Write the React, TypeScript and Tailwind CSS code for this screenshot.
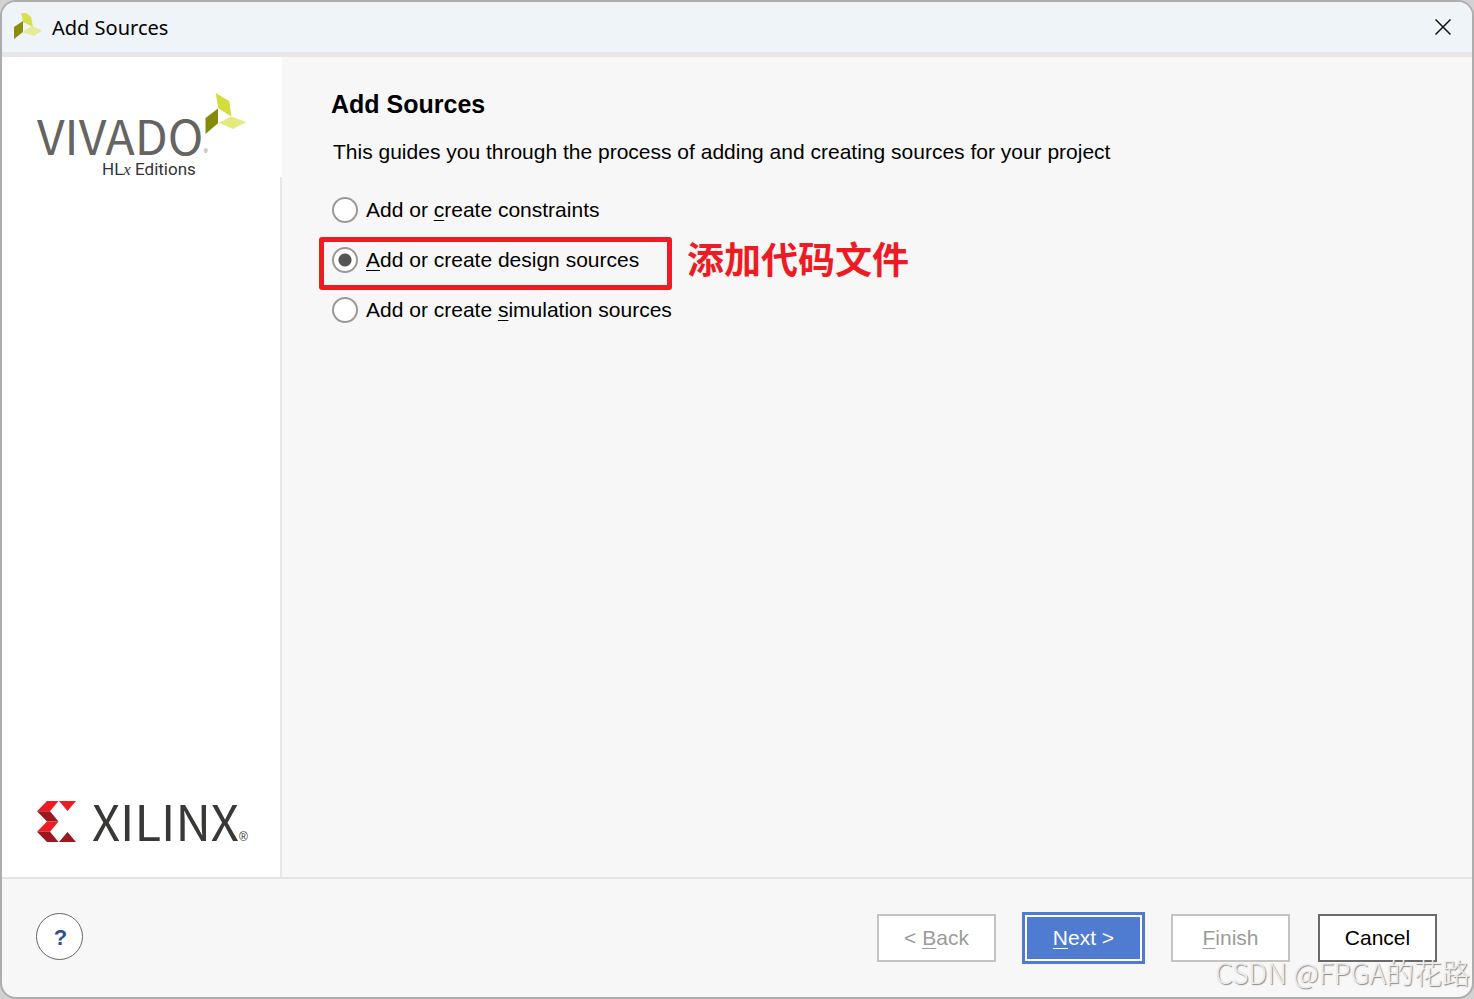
import { useState, type ReactNode } from 'react';

const SANS = "font-['Liberation_Sans',Arial,sans-serif]";

function VivadoMark({ className }: { className: string }) {
  return (
    <svg viewBox="0 0 42 42" className={className} aria-hidden="true">
      <path d="M10.5 0 24.5 8.5 26.5 24 13 15.5Z" fill="#d3de3c" />
      <path d="M0 25.5 12.8 15.8V31L0 42Z" fill="#858a0a" />
      <path d="M13.5 30.5 26.5 24 42 30 28 37Z" fill="#e4ea7f" />
    </svg>
  );
}

function TitleMark() {
  return (
    <svg viewBox="0 0 28 28" className="h-7 w-7" aria-hidden="true">
      <path d="M7 -1H11L17 4 19 14 9 9Z" fill="#d8e04f" />
      <path d="M0 14 9 8V19L0 26Z" fill="#8b8e0c" />
      <path d="M8 19 18 13 28 17.5 20 23Z" fill="#e6eb95" />
    </svg>
  );
}

function XilinxMark() {
  return (
    <svg viewBox="0 0 39 41" className="h-[41px] w-[39px]" aria-hidden="true">
      <path d="M10 0H21.5L13 10.3H0Z" fill="#ec1c24" />
      <path d="M0 10.3H13L21.5 20.5H10Z" fill="#9b1820" />
      <path d="M10 20.5H21.5L13 30.7H0Z" fill="#ec1c24" />
      <path d="M0 30.7H13L21.5 41H10Z" fill="#9b1820" />
      <path d="M22 0H39L30.5 10Z" fill="#ec1c24" />
      <path d="M22 41H39L30.5 31Z" fill="#9b1820" />
    </svg>
  );
}

function Key({ children }: { children: ReactNode }) {
  return <span className="underline decoration-1 underline-offset-[3px]">{children}</span>;
}

function Sidebar() {
  return (
    <aside className="flex w-[280px] shrink-0 flex-col bg-white">
      <div className="h-[120px] pl-[35px] pt-9">
        <div className="relative w-[210px] text-[#646463]">
          <div className="flex items-end pt-5 font-['Noto_Sans_CJK_SC',sans-serif] text-[48px] leading-[42px]">
            VIVADO<span className="font-['Liberation_Sans'] text-[6px] leading-[8px]">®</span>
          </div>
          <VivadoMark className="absolute right-0 top-0 h-[41px] w-[42px]" />
          <div className="mt-[5px] pl-[65px] font-['Roboto',sans-serif] text-[17px] leading-[18px] text-[#333]">
            HL<span className="font-['Liberation_Serif',serif] italic">x</span> Editions
          </div>
        </div>
      </div>
      <div className="flex grow flex-col justify-end border-r-2 border-[#e6e6e6] pb-[26px] pl-[35px]">
        <div className="flex h-[60px] items-center">
          <XilinxMark />
          <span className="ml-4 pb-0.5 font-['Noto_Sans_CJK_SC',sans-serif] text-[49px] leading-[60px] text-[#383837]">XILINX</span>
          <span className="self-end pb-2 text-[12px] leading-[12px] text-[#383837]">®</span>
        </div>
      </div>
    </aside>
  );
}

const CHOICES = [
  { id: 'constraints', label: <>Add or <Key>c</Key>reate constraints</> },
  { id: 'design', label: <><Key>A</Key>dd or create design sources</>, note: '添加代码文件' },
  { id: 'simulation', label: <>Add or create <Key>s</Key>imulation sources</> },
];

const BUTTON = 'h-12 w-[119px] border-2 bg-white pb-px text-center';

export default function App() {
  const [choice, setChoice] = useState('design');
  return (
    <div className="relative min-h-screen bg-[#d2d2d2]">
      <div
        className={`flex min-h-screen flex-col overflow-hidden rounded-[16px] border-2 border-[#adadad] bg-[#f7f7f7] text-[21px] text-black ${SANS}`}
      >
        <header className="flex h-[55px] shrink-0 items-center border-b-[5px] border-[#e6e6e6] bg-[#eef4f7] pl-3 pr-[21px]">
          <TitleMark />
          <h1 className="ml-[10px] grow pt-0.5 font-['Noto_Sans',sans-serif] text-[20px] leading-[28px]">Add Sources</h1>
          <button type="button" aria-label="Close">
            <svg viewBox="0 0 16 16" className="h-4 w-4" stroke="#111" strokeWidth="1.5" fill="none">
              <path d="M.5.5 15.5 15.5M15.5.5.5 15.5" />
            </svg>
          </button>
        </header>

        <div className="flex grow">
          <Sidebar />
          <main className="grow pl-[49px] pt-[31px]">
            <h2 className="text-[25px] font-bold leading-[32px]">Add Sources</h2>
            <p className="mt-4 pl-0.5 leading-[32px]">
              This guides you through the process of adding and creating sources for your project
            </p>
            <div role="radiogroup" aria-label="Source type" className="mt-[17px]">
              {CHOICES.map((c) => (
                <div key={c.id} className="relative flex h-[50px] items-center">
                  <input
                    id={c.id}
                    type="radio"
                    name="source"
                    checked={choice === c.id}
                    onChange={() => setChoice(c.id)}
                    className="ml-px h-[26px] w-[26px] appearance-none rounded-full border-2 border-[#999] bg-white checked:bg-[radial-gradient(circle,#555_0_6px,#fff_7px)]"
                  />
                  <label htmlFor={c.id} className="pl-2 leading-[32px]">{c.label}</label>
                  {c.note && (
                    <>
                      <span className="pointer-events-none absolute -left-3 top-0.5 h-[53px] w-[353px] rounded-[3px] border-[5px] border-[#ed1c24]" />
                      <span className="absolute left-[356px] top-0 whitespace-nowrap font-['Noto_Sans_CJK_SC',sans-serif] text-[37px] font-bold leading-[46px] text-[#ed1c24]">
                        {c.note}
                      </span>
                    </>
                  )}
                </div>
              ))}
            </div>
          </main>
        </div>

        <footer className="flex h-[120px] shrink-0 items-center border-t-2 border-[#e4e4e4] pl-[34px] pr-[35px]">
          <button
            type="button"
            aria-label="Help"
            className="mb-1 h-[47px] w-[47px] rounded-full border border-[#666] bg-white pl-0.5 pt-0.5 text-[22px] font-bold text-[#2f4f8f]"
          >
            ?
          </button>
          <div className="ml-auto flex items-center gap-[26px]">
            <button type="button" disabled className={`${BUTTON} border-[#c4c4c4] text-[#9b9b9b]`}>
              &lt; <Key>B</Key>ack
            </button>
            <button type="button" className="h-[52px] w-[123px] bg-[#4f7bd0] p-[3px] text-white">
              <span className="flex h-full items-center justify-center border-2 border-white pb-px">
                <span><Key>N</Key>ext &gt;</span>
              </span>
            </button>
            <button type="button" disabled className={`${BUTTON} border-[#c4c4c4] text-[#9b9b9b]`}>
              <Key>F</Key>inish
            </button>
            <button type="button" className={`${BUTTON} ml-0.5 border-[#6a6a6a]`}>Cancel</button>
          </div>
        </footer>
      </div>
      <div className="pointer-events-none absolute bottom-1.5 right-1 whitespace-nowrap font-['Noto_Sans_CJK_SC',sans-serif] text-[28px] font-light leading-[42px] text-[#ececec] [text-shadow:1px_1px_1px_#888]">
        CSDN @FPGA的花路
      </div>
    </div>
  );
}
